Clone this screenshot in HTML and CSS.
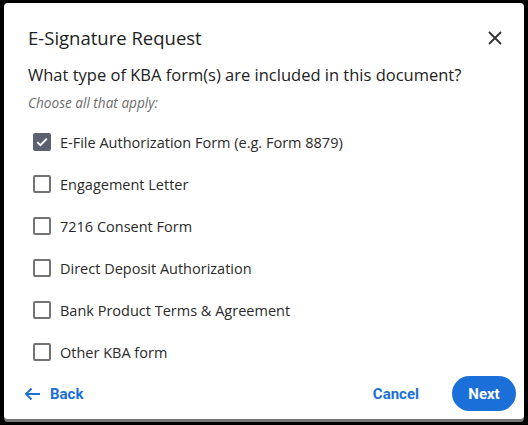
FILE: index.html
```html
<!DOCTYPE html>
<html>
<head>
<meta charset="utf-8">
<link rel="stylesheet" href="styles.css">
</head>
<body>
<div class="dialog">
  <div class="header">
    <h1 class="title">E-Signature Request</h1>
    <button class="close" aria-label="Close">
      <svg width="14" height="14" viewBox="0 0 14 14"><path d="M1 1L13 13M13 1L1 13" stroke="#333" stroke-width="1.8" fill="none"/></svg>
    </button>
  </div>
  <p class="question">What type of KBA form(s) are included in this document?</p>
  <p class="hint">Choose all that apply:</p>
  <ul class="options">
    <li class="option"><span class="box checked"><svg width="12" height="10" viewBox="0 0 12 10"><path d="M1.2 5.2L4.4 8.2L10.8 1.6" stroke="#fff" stroke-width="1.8" fill="none"/></svg></span><span>E-File Authorization Form (e.g. Form 8879)</span></li>
    <li class="option"><span class="box"></span><span>Engagement Letter</span></li>
    <li class="option"><span class="box"></span><span>7216 Consent Form</span></li>
    <li class="option"><span class="box"></span><span>Direct Deposit Authorization</span></li>
    <li class="option"><span class="box"></span><span>Bank Product Terms &amp; Agreement</span></li>
    <li class="option"><span class="box"></span><span>Other KBA form</span></li>
  </ul>
  <div class="footer">
    <button class="link back"><svg width="17" height="14" viewBox="0 0 17 14"><path d="M16 7H2M7.5 1.5L2 7L7.5 12.5" stroke="#1a6fd8" stroke-width="1.8" fill="none"/></svg>Back</button>
    <div class="actions">
      <button class="link">Cancel</button>
      <button class="primary">Next</button>
    </div>
  </div>
</div>
</body>
</html>
```
FILE: styles.css
```css
html, body {
  margin: 0;
  padding: 0;
  background: #000;
  width: 528px;
  height: 425px;
  overflow: hidden;
}
body {
  padding: 3px 4px 0 4px;
  box-sizing: border-box;
}
.dialog {
  width: 520px;
  height: 416px;
  background: #fff;
  border-radius: 4px;
  box-shadow: 0 3px 0 #777;
  box-sizing: border-box;
  padding: 0 8px 0 20px;
  display: flex;
  flex-direction: column;
  font-family: "Open Sans", "Noto Sans", sans-serif;
  color: #222;
}
.header {
  display: flex;
  justify-content: space-between;
  align-items: center;
  padding-top: 22px;
  height: 26px;
}
.title {
  margin: 0 0 0 4px;
  font-size: 18.5px;
  font-weight: 400;
  line-height: 26px;
}
.close {
  border: 0;
  background: none;
  padding: 0;
  margin-right: 14px;
  width: 14px;
  height: 14px;
  display: flex;
}
.question {
  margin: 12px 0 0 4px;
  font-size: 16.5px;
  line-height: 24px;
}
.hint {
  margin: 7px 0 0 4px;
  font-size: 13.6px;
  font-style: italic;
  color: #6b6b6b;
  line-height: 18px;
}
.options {
  list-style: none;
  margin: 9px 0 0 0;
  padding: 0 0 0 9px;
}
.option {
  display: flex;
  align-items: center;
  height: 42px;
  font-size: 14.5px;
  color: #2a2a2a;
}
.box {
  width: 18px;
  height: 18px;
  border: 2px solid #737373;
  border-radius: 2px;
  box-sizing: border-box;
  margin-right: 9px;
  display: flex;
  align-items: center;
  justify-content: center;
}
.box.checked {
  background: #5b6170;
  border-color: #5b6170;
}
.footer {
  margin-top: auto;
  margin-bottom: 8px;
  display: flex;
  justify-content: space-between;
  align-items: center;
}
.link {
  border: 0;
  background: none;
  font-family: Roboto, "Liberation Sans", sans-serif;
  font-weight: 700;
  font-size: 15px;
  color: #1a6fd8;
  padding: 0;
  display: flex;
  align-items: center;
}
.back svg {
  margin-right: 9px;
}
.actions {
  display: flex;
  align-items: center;
  gap: 33px;
}
.primary {
  border: 0;
  background: #1a6fd8;
  color: #fff;
  font-family: Roboto, "Liberation Sans", sans-serif;
  font-weight: 700;
  font-size: 15px;
  width: 64px;
  height: 35px;
  border-radius: 18px;
}
```
